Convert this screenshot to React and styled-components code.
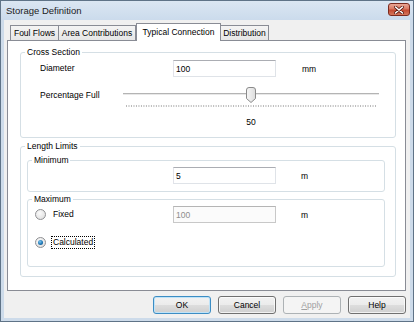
import React from "react";
import styled, { createGlobalStyle, css } from "styled-components";

const Global = createGlobalStyle`
  html, body { margin: 0; padding: 0; background: #fff; }
  body { font-family: "Liberation Sans", Arial, sans-serif; font-size: 8.5px; color: #000; }
  * { box-sizing: border-box; }
`;

const Window = styled.div`
  width: 414px;
  height: 322px;
  border: 1px solid #5f7387;
  background: #cddbea;
  display: flex;
  flex-direction: column;
`;

const TitleBar = styled.div`
  height: 19px;
  flex: none;
  display: flex;
  align-items: center;
  justify-content: space-between;
  padding: 0 3px 0 5px;
  background: linear-gradient(#dbe6f2, #cbdbec);
  font-size: 9.5px;
  color: #1b1b1b;
`;

const CloseButton = styled.div`
  width: 22px;
  height: 13px;
  margin-top: -2px;
  border: 1px solid #7b2a1e;
  border-radius: 3px;
  background: linear-gradient(#e9a796 0%, #d97862 45%, #c44a32 55%, #d5775c 100%);
  display: flex;
  align-items: center;
  justify-content: center;
`;

const Frame = styled.div`
  flex: 1;
  display: flex;
  flex-direction: column;
  padding: 0 3px 3px 3px;
`;

const Client = styled.div`
  flex: 1;
  background: #f0f0f0;
  display: flex;
  flex-direction: column;
  padding: 0 4px 4px 3px;
`;

const TabStrip = styled.div`
  height: 20px;
  flex: none;
  display: flex;
  align-items: flex-end;
  padding-left: 3px;
`;

const Tab = styled.div`
  width: ${(p) => p.$w}px;
  height: 15px;
  margin-left: -1px;
  border: 1px solid #898c95;
  border-bottom: none;
  background: linear-gradient(#f4f4f4, #e6e6e6);
  display: flex;
  align-items: center;
  justify-content: center;
  white-space: nowrap;
  &:first-child { margin-left: 0; }
  ${(p) =>
    p.$active &&
    css`
      height: 18px;
      margin-left: 0;
      margin-bottom: -1px;
      background: #fff;
      position: relative;
      z-index: 1;
      padding-bottom: 2px;
    `}
`;

const Panel = styled.div`
  height: 251px;
  flex: none;
  background: #fff;
  border: 1px solid #898c95;
  padding: 6px 9px 0 12px;
`;

const Group = styled.fieldset`
  margin: ${(p) => p.$mt || 0}px 0 0 0;
  padding: 0;
  border: 1px solid #d5dfe5;
  border-radius: 3px;
  min-width: 0;
`;

const Legend = styled.legend`
  margin-left: 4px;
  padding: 0 2px;
  line-height: 10px;
  font-size: 8.5px;
`;

const GroupBody = styled.div`
  padding: ${(p) => p.$pad};
`;

const Row = styled.div`
  display: flex;
  align-items: ${(p) => p.$align || "center"};
  height: ${(p) => p.$h || 17}px;
  margin-top: ${(p) => p.$mt || 0}px;
`;

const Label = styled.div`
  width: ${(p) => p.$w}px;
  flex: none;
  line-height: ${(p) => p.$lh || 17}px;
  white-space: nowrap;
`;

const TextBox = styled.div`
  width: 103px;
  height: 17px;
  flex: none;
  border: 1px solid #dfe3e8;
  border-top-color: #abadb3;
  border-left-color: #e2e3ea;
  background: #fff;
  padding-left: 2px;
  display: flex;
  align-items: center;
  color: ${(p) => (p.$disabled ? "#8d8d8d" : "#000")};
  ${(p) =>
    p.$disabled &&
    css`
      border-color: #c8c8c8;
      border-top-color: #b5b5b5;
      background: #fbfbfb;
    `}
`;

const Unit = styled.div`
  margin-left: ${(p) => p.$ml || 25}px;
`;

const SliderBox = styled.div`
  position: relative;
  width: 256px;
  height: 21px;
  flex: none;
`;

const Track = styled.div`
  position: absolute;
  left: 0;
  right: 0;
  top: 6px;
  height: 2px;
  border-top: 1px solid #b4b4b4;
  border-bottom: 1px solid #e8e8e8;
`;

const Thumb = styled.svg`
  position: absolute;
  top: 0;
  width: 10px;
  height: 16px;
`;

const Ticks = styled.svg`
  position: absolute;
  left: 3px;
  top: 18px;
  width: 250px;
  height: 2px;
`;

const ValueText = styled.div`
  width: 256px;
  text-align: center;
  line-height: 11px;
  margin: 9px 0 0 83px;
`;

const RadioWrap = styled.div`
  display: flex;
  align-items: center;
  width: ${(p) => p.$w || "auto"}px;
  flex: none;
`;

const RadioCircle = styled.div`
  width: 11px;
  height: 11px;
  border-radius: 50%;
  border: 1px solid #8f9093;
  background: radial-gradient(circle at 40% 35%, #fbfbfb 0%, #e4e4e4 70%, #d0d0d0 100%);
  display: flex;
  align-items: center;
  justify-content: center;
  flex: none;
  &::after {
    content: "";
    display: ${(p) => (p.$checked ? "block" : "none")};
    width: 5px;
    height: 5px;
    border-radius: 50%;
    background: radial-gradient(circle at 40% 35%, #7ec8f2 0%, #1f76b3 55%, #0f4a82 100%);
  }
`;

const RadioLabel = styled.span`
  margin-left: 5px;
  padding: 0 1px;
  line-height: 11px;
  border: 1px dotted ${(p) => (p.$focus ? "#000" : "transparent")};
`;

const ButtonRow = styled.div`
  display: flex;
  justify-content: flex-end;
  gap: 7px;
  margin-top: 5px;
`;

const Button = styled.div`
  width: 58px;
  height: 18px;
  border: 1px solid #707070;
  border-radius: 3px;
  background: linear-gradient(#f2f2f2 0%, #ebebeb 50%, #dddddd 51%, #cfcfcf 100%);
  box-shadow: inset 0 0 0 1px rgba(255, 255, 255, 0.7);
  display: flex;
  align-items: center;
  justify-content: center;
  ${(p) =>
    p.$default &&
    css`
      border-color: #3c8dc4;
      box-shadow: inset 0 0 0 1px #bfe3f8;
    `}
  ${(p) =>
    p.$disabled &&
    css`
      border-color: #adb2b5;
      background: #f4f4f4;
      box-shadow: none;
      color: #a0a0a0;
    `}
`;

const Mnemonic = styled.span`
  text-decoration: underline;
`;

function Radio({ checked, focus, children, w }) {
  return (
    <RadioWrap $w={w}>
      <RadioCircle $checked={checked} />
      <RadioLabel $focus={focus}>{children}</RadioLabel>
    </RadioWrap>
  );
}

function Slider({ value }) {
  const ticks = [];
  for (let i = 0; i <= 100; i++) {
    const x = 0.5 + (i * 249) / 100;
    ticks.push(<line key={i} x1={x} x2={x} y1="0" y2="2" stroke="#b9b9b9" strokeWidth="1" />);
  }
  const left = (value / 100) * 246;
  return (
    <SliderBox>
      <Track />
      <Thumb viewBox="0 0 10 16" style={{ left }}>
        <defs>
          <linearGradient id="tg" x1="0" x2="1" y1="0" y2="0">
            <stop offset="0" stopColor="#f7f7f7" />
            <stop offset="1" stopColor="#dcdcdc" />
          </linearGradient>
        </defs>
        <path
          d="M0.5 3 Q0.5 0.5 3 0.5 H7 Q9.5 0.5 9.5 3 V11.5 L5 15.5 L0.5 11.5 Z"
          fill="url(#tg)"
          stroke="#8a8a8a"
        />
      </Thumb>
      <Ticks viewBox="0 0 250 2">{ticks}</Ticks>
    </SliderBox>
  );
}

export default function App() {
  return (
    <>
      <Global />
      <Window>
        <TitleBar>
          <span>Storage Definition</span>
          <CloseButton>
            <svg width="10" height="8" viewBox="0 0 10 8">
              <path d="M1.5 1 L8.5 7 M8.5 1 L1.5 7" stroke="#5a1a10" strokeWidth="3" strokeLinecap="round" />
              <path d="M1.5 1 L8.5 7 M8.5 1 L1.5 7" stroke="#fff" strokeWidth="1.6" strokeLinecap="round" />
            </svg>
          </CloseButton>
        </TitleBar>
        <Frame>
          <Client>
            <TabStrip>
              <Tab $w={49}>Foul Flows</Tab>
              <Tab $w={78}>Area Contributions</Tab>
              <Tab $w={85} $active>Typical Connection</Tab>
              <Tab $w={49}>Distribution</Tab>
            </TabStrip>
            <Panel>
              <Group>
                <Legend>Cross Section</Legend>
                <GroupBody $pad="3px 0 9px 19px">
                  <Row>
                    <Label $w={133}>Diameter</Label>
                    <TextBox>100</TextBox>
                    <Unit $ml={26}>mm</Unit>
                  </Row>
                  <Row $align="flex-start" $h={21} $mt={10}>
                    <Label $w={83} $lh={16}>Percentage Full</Label>
                    <Slider value={50} />
                  </Row>
                  <ValueText>50</ValueText>
                </GroupBody>
              </Group>
              <Group $mt={3}>
                <Legend>Length Limits</Legend>
                <GroupBody $pad="4px 10px 9px 6px">
                  <Group>
                    <Legend>Minimum</Legend>
                    <GroupBody $pad="2px 0 7px 145px">
                      <Row>
                        <TextBox>5</TextBox>
                        <Unit>m</Unit>
                      </Row>
                    </GroupBody>
                  </Group>
                  <Group $mt={2}>
                    <Legend>Maximum</Legend>
                    <GroupBody $pad="2px 0 15px 7px">
                      <Row>
                        <Radio w={138}>Fixed</Radio>
                        <TextBox $disabled>100</TextBox>
                        <Unit>m</Unit>
                      </Row>
                      <Row $mt={11}>
                        <Radio checked focus>Calculated</Radio>
                      </Row>
                    </GroupBody>
                  </Group>
                </GroupBody>
              </Group>
            </Panel>
            <ButtonRow>
              <Button $default>OK</Button>
              <Button>Cancel</Button>
              <Button $disabled>
                <span><Mnemonic>A</Mnemonic>pply</span>
              </Button>
              <Button>Help</Button>
            </ButtonRow>
          </Client>
        </Frame>
      </Window>
    </>
  );
}
